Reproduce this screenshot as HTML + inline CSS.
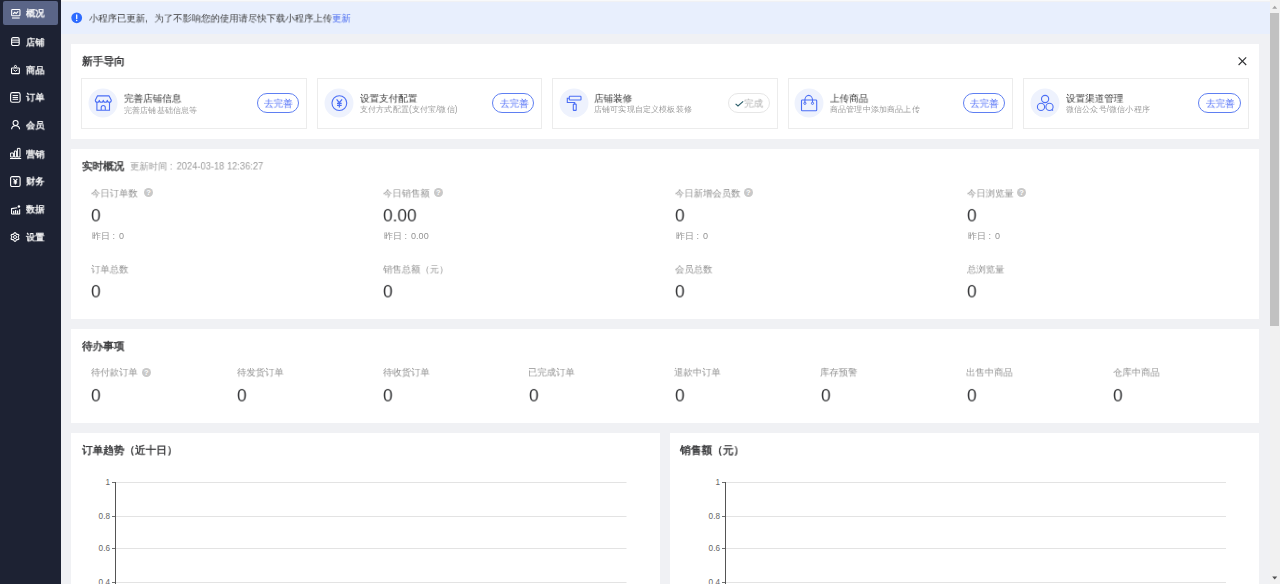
<!DOCTYPE html><html><head><meta charset="utf-8"><style>
*{margin:0;padding:0;box-sizing:border-box}
html,body{width:1280px;height:584px;overflow:hidden;background:#f0f1f4;font-family:"Liberation Sans",sans-serif;color:#333}
.abs{position:absolute;white-space:nowrap}
.tx{position:absolute;white-space:nowrap;line-height:1;transform-origin:0 0;will-change:transform}
svg{position:absolute;overflow:visible}
.card{position:absolute;background:#fff}
.q{position:absolute;width:9.2px;height:9.2px;border-radius:50%;background:#c9c9c9}
.q:after{content:'?';position:absolute;left:0;top:1.2px;width:9.2px;text-align:center;font-size:7.5px;line-height:1;color:#fff;font-weight:bold}
</style></head><body>
<div class="abs" style="left:0;top:0;width:61px;height:584px;background:#1d2233"></div>
<div class="abs" style="left:3px;top:1px;width:55px;height:24px;border-radius:2px;background:#5a6587"></div>
<svg style="left:10.5px;top:8.5px" width="12" height="12" viewBox="0 0 12 12"><rect x="0.65" y="0.55" width="8.3" height="6.2" rx="0.8" fill="none" stroke="#fff" stroke-width="1.1"/><path d="M2.1 5 L3.7 3.3 L5.2 4.5 L7.3 2.4" fill="none" stroke="#fff" stroke-width="1.1"/><path d="M1 9 H8.7" stroke="#fff" stroke-width="1.1"/></svg>
<svg style="left:11px;top:36.8px" width="12" height="12" viewBox="0 0 12 12"><rect x="0.6" y="0.6" width="7.6" height="7.9" rx="1.5" fill="none" stroke="#fff" stroke-width="1.1"/><path d="M0.8 3.1 H8 M0.8 5.2 H8" stroke="#fff" stroke-width="1"/></svg>
<svg style="left:11px;top:64.8px" width="12" height="12" viewBox="0 0 12 12"><rect x="0.55" y="3" width="7.8" height="5.6" rx="0.5" fill="none" stroke="#fff" stroke-width="1.1"/><circle cx="4.45" cy="1.5" r="1.05" fill="none" stroke="#fff" stroke-width="1"/><path d="M2.4 4.7 L4.45 6.3 L6.5 4.7" fill="none" stroke="#fff" stroke-width="1"/></svg>
<svg style="left:10.1px;top:92.1px" width="12" height="12" viewBox="0 0 12 12"><rect x="0.6" y="0.6" width="9.5" height="9.7" rx="1.8" fill="none" stroke="#fff" stroke-width="1.1"/><path d="M3.8 0.6 H6.8 M2.6 3.6 H8.1 M2.6 5.5 H8.1 M2.6 7.3 H8.1" stroke="#fff" stroke-width="1"/></svg>
<svg style="left:10.6px;top:120.2px" width="12" height="12" viewBox="0 0 12 12"><circle cx="4.6" cy="3" r="2.5" fill="none" stroke="#fff" stroke-width="1.1"/><path d="M0.6 9.3 Q0.8 5.7 4.6 5.7 Q8.4 5.7 8.6 9.3" fill="none" stroke="#fff" stroke-width="1.1"/></svg>
<svg style="left:9.8px;top:147.9px" width="12" height="12" viewBox="0 0 12 12"><path d="M0.6 5 H3.4 V9 H0.6 Z M4.4 3 H6.6 V9 H4.4 Z M7.4 0.4 H10 V9 H7.4 Z" fill="none" stroke="#fff" stroke-width="1"/><path d="M0 10.5 H11.2" stroke="#fff" stroke-width="1.1"/></svg>
<svg style="left:10.1px;top:175.9px" width="12" height="12" viewBox="0 0 12 12"><rect x="0.6" y="0.6" width="9.5" height="9.9" rx="1.5" fill="none" stroke="#fff" stroke-width="1.1"/><path d="M3.4 2.9 L5.35 5.2 L7.3 2.9 M5.35 5.2 V8.5 M3.6 5.7 H7.1 M3.6 7 H7.1" fill="none" stroke="#fff" stroke-width="1.1"/></svg>
<svg style="left:10.8px;top:204.5px" width="12" height="12" viewBox="0 0 12 12"><path d="M0.55 9.0 V3.6 L6.2 2.7 M8.65 4.3 V9.0 H0.55" fill="none" stroke="#fff" stroke-width="1.1" stroke-linejoin="round"/><path d="M2.7 8.8 V5.8 M4.6 8.8 V5 M6.6 8.8 V5.6" stroke="#fff" stroke-width="1.2"/><circle cx="7.9" cy="1.5" r="1.25" fill="#fff"/></svg>
<svg style="left:10.3px;top:232px" width="12" height="12" viewBox="0 0 12 12"><path d="M5.00 0.65 L5.54 0.86 L5.97 1.38 L6.27 1.93 L6.57 2.27 L7.02 2.36 L7.65 2.35 L8.31 2.46 L8.77 2.82 L8.86 3.40 L8.62 4.03 L8.30 4.57 L8.15 5.00 L8.30 5.43 L8.62 5.97 L8.86 6.60 L8.77 7.17 L8.31 7.54 L7.65 7.65 L7.02 7.64 L6.57 7.73 L6.27 8.07 L5.97 8.62 L5.54 9.14 L5.00 9.35 L4.46 9.14 L4.03 8.62 L3.73 8.07 L3.43 7.73 L2.98 7.64 L2.35 7.65 L1.69 7.54 L1.23 7.18 L1.14 6.60 L1.38 5.97 L1.70 5.43 L1.85 5.00 L1.70 4.57 L1.38 4.03 L1.14 3.40 L1.23 2.82 L1.69 2.46 L2.35 2.35 L2.98 2.36 L3.42 2.27 L3.73 1.93 L4.03 1.38 L4.46 0.86 Z" fill="none" stroke="#fff" stroke-width="1.1" stroke-linejoin="round"/><circle cx="5" cy="5" r="1.5" fill="none" stroke="#fff" stroke-width="1"/></svg>
<div class="abs" style="left:61px;top:0;width:1209px;height:1px;background:#f8f9fa"></div>
<div class="abs" style="left:61px;top:2px;width:1209px;height:32px;background:#e8effd"></div>
<svg style="left:71px;top:12px" width="12" height="12" viewBox="0 0 12 12"><circle cx="5.7" cy="5.8" r="5.4" fill="#2d6bff"/><path d="M5.7 2.9 V6.6" stroke="#fff" stroke-width="1.3" stroke-linecap="round"/><circle cx="5.7" cy="8.6" r="0.75" fill="#fff"/></svg>
<div class="card" style="left:71px;top:44px;width:1188px;height:95px"></div>
<svg style="left:1237.5px;top:56.5px" width="10" height="10" viewBox="0 0 10 10"><path d="M0.6 0.4 L8.2 8 M8.2 0.4 L0.6 8" stroke="#303133" stroke-width="1.1"/></svg>
<div class="abs" style="left:81.40px;top:78px;width:225.5px;height:51px;border:1px solid #ececec;background:#fff"></div>
<svg style="left:88.15px;top:88.2px" width="30" height="30" viewBox="0 0 30 30"><circle cx="15" cy="15" r="14.5" fill="#eef2fd"/><path d="M9.4 7.9 H21.1 L23.3 12.2 A2 2 0 0 1 19.3 12.2 A2 2 0 0 1 15.3 12.2 A2 2 0 0 1 11.3 12.2 A2 2 0 0 1 7.3 12.2 Z" fill="none" stroke="#4b6ef5" stroke-width="1.1" stroke-linejoin="round"/><path d="M8.9 14.1 V22.3 H21.5 V14.1 M13.2 22.3 V19.5 A2.05 2.05 0 0 1 17.3 19.5 V22.3" fill="none" stroke="#4b6ef5" stroke-width="1.1"/></svg>
<div class="abs" style="left:256.70px;top:93px;width:42.3px;height:20px;border:1px solid #5f7ff2;border-radius:10px"></div>
<div class="abs" style="left:316.80px;top:78px;width:225.5px;height:51px;border:1px solid #ececec;background:#fff"></div>
<svg style="left:323.55px;top:88.2px" width="30" height="30" viewBox="0 0 30 30"><circle cx="15" cy="15" r="14.5" fill="#eef2fd"/><circle cx="15.35" cy="15.1" r="7.4" fill="none" stroke="#4b6ef5" stroke-width="1.1"/><path d="M12.6 11.4 L15.35 14.7 L18.1 11.4 M15.35 14.7 V19.4 M13 15.4 H17.7 M13 17.3 H17.7" fill="none" stroke="#4b6ef5" stroke-width="1.2"/></svg>
<div class="abs" style="left:492.10px;top:93px;width:42.3px;height:20px;border:1px solid #5f7ff2;border-radius:10px"></div>
<div class="abs" style="left:552.20px;top:78px;width:225.5px;height:51px;border:1px solid #ececec;background:#fff"></div>
<svg style="left:558.95px;top:88.2px" width="30" height="30" viewBox="0 0 30 30"><circle cx="15" cy="15" r="14.5" fill="#eef2fd"/><rect x="10.3" y="8.3" width="11.7" height="3.7" rx="0.6" fill="none" stroke="#4b6ef5" stroke-width="1.1"/><path d="M10.3 10.2 H8.3 V14.5 H15.7 V16" fill="none" stroke="#4b6ef5" stroke-width="1.1"/><rect x="14.3" y="16.1" width="2.9" height="6.3" rx="0.5" fill="none" stroke="#4b6ef5" stroke-width="1.1"/></svg>
<div class="abs" style="left:727.90px;top:93px;width:42.3px;height:20px;border:1px solid #e6e6e6;border-radius:10px"></div>
<svg style="left:734.60px;top:100.5px" width="9" height="6" viewBox="0 0 9 6"><path d="M0.6 2.8 L3 5 L8.2 0.4" fill="none" stroke="#2a5d6a" stroke-width="1.1"/></svg>
<div class="abs" style="left:787.60px;top:78px;width:225.5px;height:51px;border:1px solid #ececec;background:#fff"></div>
<svg style="left:794.35px;top:88.2px" width="30" height="30" viewBox="0 0 30 30"><circle cx="15" cy="15" r="14.5" fill="#eef2fd"/><rect x="7.5" y="12" width="15.2" height="10.7" rx="0.8" fill="none" stroke="#4b6ef5" stroke-width="1.1"/><path d="M10.9 14.2 V12 A3.8 4.6 0 0 1 18.5 12 V14.2" fill="none" stroke="#4b6ef5" stroke-width="1.1"/><circle cx="10.9" cy="15.3" r="1.1" fill="none" stroke="#4b6ef5" stroke-width="1"/><circle cx="18.5" cy="15.3" r="1.1" fill="none" stroke="#4b6ef5" stroke-width="1"/></svg>
<div class="abs" style="left:962.90px;top:93px;width:42.3px;height:20px;border:1px solid #5f7ff2;border-radius:10px"></div>
<div class="abs" style="left:1023.00px;top:78px;width:225.5px;height:51px;border:1px solid #ececec;background:#fff"></div>
<svg style="left:1029.75px;top:88.2px" width="30" height="30" viewBox="0 0 30 30"><circle cx="15" cy="15" r="14.5" fill="#eef2fd"/><circle cx="15.1" cy="11" r="3.6" fill="none" stroke="#4b6ef5" stroke-width="1.1"/><circle cx="11" cy="18.9" r="3.6" fill="none" stroke="#4b6ef5" stroke-width="1.1"/><circle cx="19.5" cy="18.9" r="3.6" fill="none" stroke="#4b6ef5" stroke-width="1.1"/><path d="M21.8 21.5 L23 22.6" stroke="#4b6ef5" stroke-width="1.3"/></svg>
<div class="abs" style="left:1198.30px;top:93px;width:42.3px;height:20px;border:1px solid #5f7ff2;border-radius:10px"></div>
<div class="card" style="left:71px;top:149px;width:1188px;height:170px"></div>
<div class="q" style="left:143.9px;top:188px"></div>
<div class="q" style="left:433.6px;top:188px"></div>
<div class="q" style="left:743.8px;top:188px"></div>
<div class="q" style="left:1016.9px;top:188px"></div>
<div class="card" style="left:71px;top:329px;width:1188px;height:94px"></div>
<div class="q" style="left:141.6px;top:368px"></div>
<div class="card" style="left:71px;top:433px;width:589px;height:160px"></div>
<div class="abs" style="left:80.0px;top:478.0px;width:30px;text-align:right;font-size:8.2px;line-height:10px;color:#666">1</div>
<div class="abs" style="left:80.0px;top:512.0px;width:30px;text-align:right;font-size:8.2px;line-height:10px;color:#666">0.8</div>
<div class="abs" style="left:80.0px;top:544.0px;width:30px;text-align:right;font-size:8.2px;line-height:10px;color:#666">0.6</div>
<div class="abs" style="left:80.0px;top:578.0px;width:30px;text-align:right;font-size:8.2px;line-height:10px;color:#666">0.4</div>
<svg style="left:0;top:0" width="1280" height="584"><path d="M116.0 482.5 H626.5" stroke="#e3e3e3" stroke-width="1"/><path d="M112.0 482.5 H115.5" stroke="#6e6e6e" stroke-width="1"/><path d="M116.0 516.5 H626.5" stroke="#e3e3e3" stroke-width="1"/><path d="M112.0 516.5 H115.5" stroke="#6e6e6e" stroke-width="1"/><path d="M116.0 548.5 H626.5" stroke="#e3e3e3" stroke-width="1"/><path d="M112.0 548.5 H115.5" stroke="#6e6e6e" stroke-width="1"/><path d="M116.0 582.5 H626.5" stroke="#e3e3e3" stroke-width="1"/><path d="M112.0 582.5 H115.5" stroke="#6e6e6e" stroke-width="1"/><path d="M115.5 482 V600" stroke="#555" stroke-width="1"/></svg>
<div class="card" style="left:670px;top:433px;width:589px;height:160px"></div>
<div class="abs" style="left:690.0px;top:478.0px;width:30px;text-align:right;font-size:8.2px;line-height:10px;color:#666">1</div>
<div class="abs" style="left:690.0px;top:512.0px;width:30px;text-align:right;font-size:8.2px;line-height:10px;color:#666">0.8</div>
<div class="abs" style="left:690.0px;top:544.0px;width:30px;text-align:right;font-size:8.2px;line-height:10px;color:#666">0.6</div>
<div class="abs" style="left:690.0px;top:578.0px;width:30px;text-align:right;font-size:8.2px;line-height:10px;color:#666">0.4</div>
<svg style="left:0;top:0" width="1280" height="584"><path d="M726.0 482.5 H1226" stroke="#e3e3e3" stroke-width="1"/><path d="M722.0 482.5 H725.5" stroke="#6e6e6e" stroke-width="1"/><path d="M726.0 516.5 H1226" stroke="#e3e3e3" stroke-width="1"/><path d="M722.0 516.5 H725.5" stroke="#6e6e6e" stroke-width="1"/><path d="M726.0 548.5 H1226" stroke="#e3e3e3" stroke-width="1"/><path d="M722.0 548.5 H725.5" stroke="#6e6e6e" stroke-width="1"/><path d="M726.0 582.5 H1226" stroke="#e3e3e3" stroke-width="1"/><path d="M722.0 582.5 H725.5" stroke="#6e6e6e" stroke-width="1"/><path d="M725.5 482 V600" stroke="#555" stroke-width="1"/></svg>
<div class="tx" style="left:26.20px;top:8.80px;font-size:10px;font-weight:400;color:#fff;transform:scale(0.9250);-webkit-text-stroke:0.35px #fff">概况</div>
<div class="tx" style="left:26.20px;top:37.72px;font-size:10px;font-weight:400;color:#fff;transform:scale(0.9250);-webkit-text-stroke:0.35px #fff">店铺</div>
<div class="tx" style="left:26.20px;top:65.72px;font-size:10px;font-weight:400;color:#fff;transform:scale(0.9250);-webkit-text-stroke:0.35px #fff">商品</div>
<div class="tx" style="left:26.20px;top:92.80px;font-size:10px;font-weight:400;color:#fff;transform:scale(0.9250);-webkit-text-stroke:0.35px #fff">订单</div>
<div class="tx" style="left:26.20px;top:120.80px;font-size:10px;font-weight:400;color:#fff;transform:scale(0.9250);-webkit-text-stroke:0.35px #fff">会员</div>
<div class="tx" style="left:26.20px;top:149.73px;font-size:10px;font-weight:400;color:#fff;transform:scale(0.9250);-webkit-text-stroke:0.35px #fff">营销</div>
<div class="tx" style="left:26.20px;top:176.80px;font-size:10px;font-weight:400;color:#fff;transform:scale(0.9250);-webkit-text-stroke:0.35px #fff">财务</div>
<div class="tx" style="left:26.20px;top:204.80px;font-size:10px;font-weight:400;color:#fff;transform:scale(0.9250);-webkit-text-stroke:0.35px #fff">数据</div>
<div class="tx" style="left:26.20px;top:232.80px;font-size:10px;font-weight:400;color:#fff;transform:scale(0.9250);-webkit-text-stroke:0.35px #fff">设置</div>
<div class="tx" style="left:88.70px;top:13.90px;font-size:10px;font-weight:400;color:#3a3a3a;transform:scale(0.9348);">小程序已更新<span style="display:inline-block;width:1em">,</span>为了不影响您的使用请尽快下载小程序上传<span style="color:#4a6cf0">更新</span></div>
<div class="tx" style="left:81.50px;top:55.90px;font-size:11px;font-weight:400;color:#303133;transform:scale(0.9791);-webkit-text-stroke:0.4px #303133">新手导向</div>
<div class="tx" style="left:123.64px;top:94.40px;font-size:10px;font-weight:400;color:#333;transform:scale(0.9559);">完善店铺信息</div>
<div class="tx" style="left:123.58px;top:107.27px;font-size:8px;font-weight:400;color:#9c9c9c;transform:scale(1.0200);">完善店铺基础信息等</div>
<div class="tx" style="left:264.25px;top:99.10px;font-size:10px;font-weight:400;color:#4f6ef7;transform:scale(0.9569);">去完善</div>
<div class="tx" style="left:360.00px;top:94.40px;font-size:10px;font-weight:400;color:#333;transform:scale(0.9559);">设置支付配置</div>
<div class="tx" style="left:360.00px;top:106.25px;font-size:8px;font-weight:400;color:#9c9c9c;transform:scale(1.0200);">支付方式配置(支付宝/微信)</div>
<div class="tx" style="left:499.65px;top:99.10px;font-size:10px;font-weight:400;color:#4f6ef7;transform:scale(0.9569);">去完善</div>
<div class="tx" style="left:594.44px;top:94.40px;font-size:10px;font-weight:400;color:#333;transform:scale(0.9559);">店铺装修</div>
<div class="tx" style="left:594.38px;top:106.25px;font-size:8px;font-weight:400;color:#9c9c9c;transform:scale(1.0200);">店铺可实现自定义模板装修</div>
<div class="tx" style="left:744.24px;top:99.40px;font-size:10px;font-weight:400;color:#b0b0b0;transform:scale(0.9569);">完成</div>
<div class="tx" style="left:829.84px;top:94.40px;font-size:10px;font-weight:400;color:#333;transform:scale(0.9559);">上传商品</div>
<div class="tx" style="left:829.78px;top:106.25px;font-size:8px;font-weight:400;color:#9c9c9c;transform:scale(1.0200);">商品管理中添加商品上传</div>
<div class="tx" style="left:970.45px;top:99.10px;font-size:10px;font-weight:400;color:#4f6ef7;transform:scale(0.9569);">去完善</div>
<div class="tx" style="left:1066.20px;top:94.40px;font-size:10px;font-weight:400;color:#333;transform:scale(0.9559);">设置渠道管理</div>
<div class="tx" style="left:1066.20px;top:106.25px;font-size:8px;font-weight:400;color:#9c9c9c;transform:scale(1.0200);">微信公众号/微信小程序</div>
<div class="tx" style="left:1205.85px;top:99.10px;font-size:10px;font-weight:400;color:#4f6ef7;transform:scale(0.9569);">去完善</div>
<div class="tx" style="left:81.70px;top:161.00px;font-size:11px;font-weight:400;color:#303133;transform:scale(0.9591);-webkit-text-stroke:0.4px #303133">实时概况</div>
<div class="tx" style="left:130.37px;top:161.80px;font-size:10px;font-weight:400;color:#9c9c9c;transform:scale(0.9324);">更新时间<span style="display:inline-block;width:1em;padding-left:0.28em">:</span>2024-03-18 12:36:27</div>
<div class="tx" style="left:91.30px;top:189.20px;font-size:10px;font-weight:400;color:#929292;transform:scale(0.9340);">今日订单数</div>
<div class="tx" style="left:90.64px;top:206.68px;font-size:18px;font-weight:400;color:#303133;transform:scale(0.9588);">0</div>
<div class="tx" style="left:91.90px;top:231.90px;font-size:9px;font-weight:400;color:#929292;transform:scale(1.0031);">昨日<span style="display:inline-block;width:1em;padding-left:0.28em">:</span>0</div>
<div class="tx" style="left:91.30px;top:265.30px;font-size:10px;font-weight:400;color:#929292;transform:scale(0.9340);">订单总数</div>
<div class="tx" style="left:90.64px;top:282.68px;font-size:18px;font-weight:400;color:#303133;transform:scale(0.9588);">0</div>
<div class="tx" style="left:383.30px;top:189.20px;font-size:10px;font-weight:400;color:#929292;transform:scale(0.9340);">今日销售额</div>
<div class="tx" style="left:382.64px;top:206.68px;font-size:18px;font-weight:400;color:#303133;transform:scale(0.9588);">0.00</div>
<div class="tx" style="left:383.90px;top:231.90px;font-size:9px;font-weight:400;color:#929292;transform:scale(1.0031);">昨日<span style="display:inline-block;width:1em;padding-left:0.28em">:</span>0.00</div>
<div class="tx" style="left:383.30px;top:265.30px;font-size:10px;font-weight:400;color:#929292;transform:scale(0.9340);">销售总额（元）</div>
<div class="tx" style="left:382.64px;top:282.68px;font-size:18px;font-weight:400;color:#303133;transform:scale(0.9588);">0</div>
<div class="tx" style="left:675.30px;top:189.20px;font-size:10px;font-weight:400;color:#929292;transform:scale(0.9340);">今日新增会员数</div>
<div class="tx" style="left:674.64px;top:206.68px;font-size:18px;font-weight:400;color:#303133;transform:scale(0.9588);">0</div>
<div class="tx" style="left:675.90px;top:231.90px;font-size:9px;font-weight:400;color:#929292;transform:scale(1.0031);">昨日<span style="display:inline-block;width:1em;padding-left:0.28em">:</span>0</div>
<div class="tx" style="left:675.30px;top:265.30px;font-size:10px;font-weight:400;color:#929292;transform:scale(0.9340);">会员总数</div>
<div class="tx" style="left:674.64px;top:282.68px;font-size:18px;font-weight:400;color:#303133;transform:scale(0.9588);">0</div>
<div class="tx" style="left:967.30px;top:189.20px;font-size:10px;font-weight:400;color:#929292;transform:scale(0.9340);">今日浏览量</div>
<div class="tx" style="left:966.64px;top:206.68px;font-size:18px;font-weight:400;color:#303133;transform:scale(0.9588);">0</div>
<div class="tx" style="left:967.90px;top:231.90px;font-size:9px;font-weight:400;color:#929292;transform:scale(1.0031);">昨日<span style="display:inline-block;width:1em;padding-left:0.28em">:</span>0</div>
<div class="tx" style="left:967.30px;top:265.30px;font-size:10px;font-weight:400;color:#929292;transform:scale(0.9340);">总浏览量</div>
<div class="tx" style="left:966.64px;top:282.68px;font-size:18px;font-weight:400;color:#303133;transform:scale(0.9588);">0</div>
<div class="tx" style="left:81.60px;top:341.30px;font-size:11px;font-weight:400;color:#303133;transform:scale(0.9636);-webkit-text-stroke:0.4px #303133">待办事项</div>
<div class="tx" style="left:91.40px;top:368.20px;font-size:10px;font-weight:400;color:#929292;transform:scale(0.9340);">待付款订单</div>
<div class="tx" style="left:90.64px;top:387.08px;font-size:18px;font-weight:400;color:#303133;transform:scale(0.9588);">0</div>
<div class="tx" style="left:237.40px;top:368.20px;font-size:10px;font-weight:400;color:#929292;transform:scale(0.9340);">待发货订单</div>
<div class="tx" style="left:236.64px;top:387.08px;font-size:18px;font-weight:400;color:#303133;transform:scale(0.9588);">0</div>
<div class="tx" style="left:383.40px;top:368.20px;font-size:10px;font-weight:400;color:#929292;transform:scale(0.9340);">待收货订单</div>
<div class="tx" style="left:382.64px;top:387.08px;font-size:18px;font-weight:400;color:#303133;transform:scale(0.9588);">0</div>
<div class="tx" style="left:528.47px;top:368.20px;font-size:10px;font-weight:400;color:#929292;transform:scale(0.9340);">已完成订单</div>
<div class="tx" style="left:528.64px;top:387.08px;font-size:18px;font-weight:400;color:#303133;transform:scale(0.9588);">0</div>
<div class="tx" style="left:674.47px;top:368.20px;font-size:10px;font-weight:400;color:#929292;transform:scale(0.9340);">退款中订单</div>
<div class="tx" style="left:674.64px;top:387.08px;font-size:18px;font-weight:400;color:#303133;transform:scale(0.9588);">0</div>
<div class="tx" style="left:820.47px;top:368.20px;font-size:10px;font-weight:400;color:#929292;transform:scale(0.9340);">库存预警</div>
<div class="tx" style="left:820.64px;top:387.08px;font-size:18px;font-weight:400;color:#303133;transform:scale(0.9588);">0</div>
<div class="tx" style="left:966.47px;top:368.20px;font-size:10px;font-weight:400;color:#929292;transform:scale(0.9340);">出售中商品</div>
<div class="tx" style="left:966.64px;top:387.08px;font-size:18px;font-weight:400;color:#303133;transform:scale(0.9588);">0</div>
<div class="tx" style="left:1113.40px;top:368.20px;font-size:10px;font-weight:400;color:#929292;transform:scale(0.9340);">仓库中商品</div>
<div class="tx" style="left:1112.64px;top:387.08px;font-size:18px;font-weight:400;color:#303133;transform:scale(0.9588);">0</div>
<div class="tx" style="left:81.90px;top:445.30px;font-size:11px;font-weight:400;color:#303133;transform:scale(0.9641);-webkit-text-stroke:0.4px #303133">订单趋势（近十日）</div>
<div class="tx" style="left:680.20px;top:445.30px;font-size:11px;font-weight:400;color:#303133;transform:scale(0.9729);-webkit-text-stroke:0.4px #303133">销售额（元）</div>
<div class="abs" style="left:1270px;top:0;width:10px;height:584px;background:#f1f1f1"></div>
<div class="abs" style="left:1270px;top:13px;width:9px;height:313px;background:#c1c1c1"></div>
<svg style="left:1270px;top:0" width="10" height="584" viewBox="0 0 10 584"><path d="M2.2 8.8 L4.7 5.8 L7.2 8.8 Z" fill="#a3a3a3"/><path d="M2.2 576.4 L4.7 579.4 L7.2 576.4 Z" fill="#505050"/></svg>
</body></html>
